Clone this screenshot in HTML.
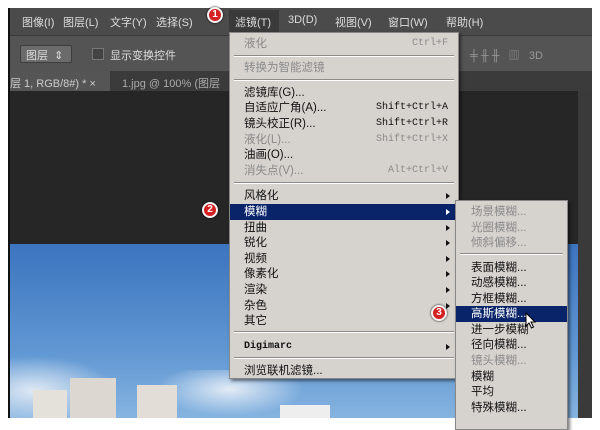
<!DOCTYPE html>
<html><head><meta charset="utf-8"><style>
*{margin:0;padding:0;box-sizing:border-box}
body{width:600px;height:418px;overflow:hidden;background:#fff;position:relative;font-family:"Liberation Sans","Noto Sans CJK SC",sans-serif}
.a{position:absolute}
.t{position:absolute;white-space:nowrap;font-size:11px;color:#ddd}
.m{position:absolute;background:#d6d3ce;border:1px solid #888;box-shadow:2px 2px 3px rgba(0,0,0,.5)}
.i{position:absolute;left:0;right:0;height:16px;line-height:16px;font-size:11.5px;color:#111;white-space:nowrap}
.i.d{color:#8a8a8a}
.i.h{background:#0a246a;color:#fff}
.s{position:absolute;left:4px;right:4px;height:2px;border-top:1px solid #8d8b87;border-bottom:1px solid #fff}
.k{position:absolute;right:10px;top:0;font-family:"Liberation Mono",monospace;font-size:10px}
.ar{position:absolute;right:8px;top:5px;width:0;height:0;border-left:4px solid #111;border-top:3px solid transparent;border-bottom:3px solid transparent}
.h .ar{border-left-color:#fff}
.b{position:absolute;width:16px;height:16px;border-radius:50%;background:#d42020;border:2px solid #f4f4f4;color:#fff;font-size:10px;font-weight:bold;text-align:center;line-height:12px;box-shadow:0 0 2px #000}
</style></head><body>
<div class="a" style="left:8px;top:8px;width:584px;height:410px;background:#262626"></div>
<div class="a" style="left:8px;top:8px;width:584px;height:27px;background:#4b4b4b"></div>
<div class="a" style="left:8px;top:35px;width:584px;height:36px;background:#545454;border-top:1px solid #3a3a3a"></div>
<div class="a" style="left:8px;top:71px;width:584px;height:20px;background:#3b3b3b"></div>
<div class="a" style="left:8px;top:71px;width:102px;height:20px;background:#555"></div>
<div class="a" style="left:578px;top:91px;width:14px;height:327px;background:#3a3a3a"></div>
<div class="a" style="left:8px;top:8px;width:2px;height:410px;background:#111"></div>
<div class="a" style="left:10px;top:244px;width:568px;height:174px;background:linear-gradient(#3c74bf,#5f96d2 60%,#86b4e0)"></div>
<div class="a" style="left:10px;top:350px;width:120px;height:68px;background:radial-gradient(ellipse at 20% 60%,#dfe9f4,transparent 60%)"></div>
<div class="a" style="left:150px;top:370px;width:160px;height:48px;background:radial-gradient(ellipse at 50% 40%,#e3ecf6,transparent 65%)"></div>
<div class="a" style="left:33px;top:390px;width:34px;height:28px;background:#e4e0da"></div>
<div class="a" style="left:70px;top:378px;width:46px;height:40px;background:#dcd8d1"></div>
<div class="a" style="left:137px;top:385px;width:40px;height:33px;background:#e2ddd6"></div>
<div class="a" style="left:280px;top:405px;width:50px;height:13px;background:#eee"></div>
<div class="t" style="left:22px;top:14px">图像(I)</div>
<div class="t" style="left:63px;top:14px">图层(L)</div>
<div class="t" style="left:110px;top:14px">文字(Y)</div>
<div class="t" style="left:156px;top:14px">选择(S)</div>
<div class="a" style="left:229px;top:10px;width:50px;height:24px;background:#3a3a3a"></div>
<div class="t" style="left:235px;top:14px">滤镜(T)</div>
<div class="t" style="left:288px;top:14px">3D(D)</div>
<div class="t" style="left:335px;top:14px">视图(V)</div>
<div class="t" style="left:388px;top:14px">窗口(W)</div>
<div class="t" style="left:446px;top:14px">帮助(H)</div>
<div class="a" style="left:20px;top:45px;width:52px;height:18px;background:#6b6b6b;border:1px solid #3d3d3d;border-radius:2px"></div>
<div class="t" style="left:26px;top:47px">图层 &nbsp;⇕</div>
<div class="a" style="left:92px;top:48px;width:12px;height:12px;background:#444;border:1px solid #777"></div>
<div class="t" style="left:110px;top:47px">显示变换控件</div>
<div class="t" style="left:470px;top:47px;color:#999">╪ ╫ ╫ &nbsp; ▥ &nbsp; 3D</div>
<div class="t" style="left:10px;top:75px;color:#ccc">层 1, RGB/8#) * ×</div>
<div class="t" style="left:122px;top:75px;color:#aaa">1.jpg @ 100% (图层</div>

<div class="m" style="left:229px;top:32px;width:230px;height:347px">
<div class="i d" style="top:3px;padding-left:14px">液化<span class="k">Ctrl+F</span></div>
<div class="s" style="top:22px"></div>
<div class="i d" style="top:27px;padding-left:14px">转换为智能滤镜</div>
<div class="s" style="top:46px"></div>
<div class="i" style="top:52px;padding-left:14px">滤镜库(G)...</div>
<div class="i" style="top:67px;padding-left:14px">自适应广角(A)...<span class="k">Shift+Ctrl+A</span></div>
<div class="i" style="top:83px;padding-left:14px">镜头校正(R)...<span class="k">Shift+Ctrl+R</span></div>
<div class="i d" style="top:99px;padding-left:14px">液化(L)...<span class="k">Shift+Ctrl+X</span></div>
<div class="i" style="top:114px;padding-left:14px">油画(O)...</div>
<div class="i d" style="top:130px;padding-left:14px">消失点(V)...<span class="k">Alt+Ctrl+V</span></div>
<div class="s" style="top:149px"></div>
<div class="i" style="top:155px;padding-left:14px">风格化<span class="ar"></span></div>
<div class="i h" style="top:171px;padding-left:14px">模糊<span class="ar"></span></div>
<div class="i" style="top:187px;padding-left:14px">扭曲<span class="ar"></span></div>
<div class="i" style="top:202px;padding-left:14px">锐化<span class="ar"></span></div>
<div class="i" style="top:218px;padding-left:14px">视频<span class="ar"></span></div>
<div class="i" style="top:233px;padding-left:14px">像素化<span class="ar"></span></div>
<div class="i" style="top:249px;padding-left:14px">渲染<span class="ar"></span></div>
<div class="i" style="top:265px;padding-left:14px">杂色<span class="ar"></span></div>
<div class="i" style="top:280px;padding-left:14px">其它</div>
<div class="s" style="top:298px"></div>
<div class="i" style="top:306px;padding-left:14px;font-family:'Liberation Mono',monospace;font-size:10px;font-weight:bold">Digimarc<span class="ar"></span></div>
<div class="s" style="top:324px"></div>
<div class="i" style="top:330px;padding-left:14px">浏览联机滤镜...</div>
</div>

<div class="m" style="left:455px;top:200px;width:113px;height:230px">
<div class="i d" style="top:3px;padding-left:15px">场景模糊...</div>
<div class="i d" style="top:19px;padding-left:15px">光圈模糊...</div>
<div class="i d" style="top:34px;padding-left:15px">倾斜偏移...</div>
<div class="s" style="top:52px"></div>
<div class="i" style="top:59px;padding-left:15px">表面模糊...</div>
<div class="i" style="top:74px;padding-left:15px">动感模糊...</div>
<div class="i" style="top:90px;padding-left:15px">方框模糊...</div>
<div class="i h" style="top:105px;padding-left:15px">高斯模糊...</div>
<div class="i" style="top:121px;padding-left:15px">进一步模糊</div>
<div class="i" style="top:136px;padding-left:15px">径向模糊...</div>
<div class="i d" style="top:152px;padding-left:15px">镜头模糊...</div>
<div class="i" style="top:168px;padding-left:15px">模糊</div>
<div class="i" style="top:183px;padding-left:15px">平均</div>
<div class="i" style="top:199px;padding-left:15px">特殊模糊...</div>
</div>
<svg class="a" style="left:525px;top:312px" width="12" height="18" viewBox="0 0 12 18"><path d="M1 1 L1 14 L4 11 L6.5 16 L8.5 15 L6 10 L10 10 Z" fill="#fff" stroke="#000" stroke-width="1"/></svg>

<div class="b" style="left:207px;top:7px">1</div>
<div class="b" style="left:202px;top:202px">2</div>
<div class="b" style="left:431px;top:305px">3</div>
</body></html>
